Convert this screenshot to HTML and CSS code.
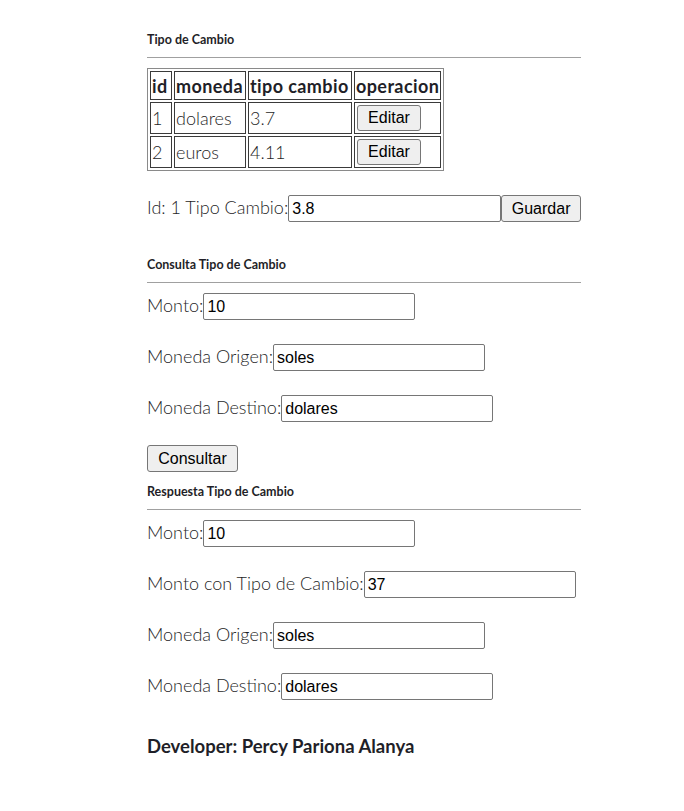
FILE: index.html
```html
<!DOCTYPE html>
<html lang="es">
<head>
<meta charset="utf-8">
<title>Tipo de Cambio</title>
<link rel="stylesheet" href="styles.css">
</head>
<body>
<div class="container">
  <h5 class="section-title first">Tipo de Cambio</h5>
  <hr class="rule">
  <table class="rates">
    <thead>
      <tr><th class="c-id">id</th><th class="c-mon">moneda</th><th class="c-tc">tipo cambio</th><th class="c-op">operacion</th></tr>
    </thead>
    <tbody>
      <tr><td>1</td><td>dolares</td><td>3.7</td><td><button class="btn btn-edit">Editar</button></td></tr>
      <tr><td>2</td><td>euros</td><td>4.11</td><td><button class="btn btn-edit">Editar</button></td></tr>
    </tbody>
  </table>
  <div class="row edit-row">
    <span class="label">Id: 1 Tipo Cambio:</span><input class="field field-wide" value="3.8"><button class="btn btn-save">Guardar</button>
  </div>

  <h5 class="section-title second">Consulta Tipo de Cambio</h5>
  <hr class="rule">
  <div class="row"><span class="label">Monto:</span><input class="field" value="10"></div>
  <div class="row"><span class="label">Moneda Origen:</span><input class="field" value="soles"></div>
  <div class="row"><span class="label">Moneda Destino:</span><input class="field" value="dolares"></div>
  <div class="row btn-row"><button class="btn btn-query">Consultar</button></div>

  <h5 class="section-title third">Respuesta Tipo de Cambio</h5>
  <hr class="rule">
  <div class="row"><span class="label">Monto:</span><input class="field" value="10"></div>
  <div class="row"><span class="label">Monto con Tipo de Cambio:</span><input class="field" value="37"></div>
  <div class="row"><span class="label">Moneda Origen:</span><input class="field" value="soles"></div>
  <div class="row"><span class="label">Moneda Destino:</span><input class="field" value="dolares"></div>

  <p class="developer">Developer: Percy Pariona Alanya</p>
</div>
</body>
</html>
```
FILE: styles.css
```css
html, body {
  margin: 0;
  padding: 0;
  background: #ffffff;
}
body {
  font-family: "Lato", "Open Sans", sans-serif;
  color: #1f1f28;
}
.container {
  width: 434px;
  margin-left: 147px;
  padding-top: 33px;
}
.section-title {
  margin: 0;
  font-size: 12.5px;
  line-height: 14px;
  font-weight: 700;
  color: #1f1f28;
}
.section-title.second { margin-top: 36px; }
.section-title.third { margin-top: 13px; }
.rule {
  margin: 10px 0 10px 0;
  border: 0;
  border-top: 1px solid #a0a0a0;
  height: 0;
}
.rates {
  border: 1px solid #8a8a8a;
  border-spacing: 2px;
  font-size: 18px;
  font-weight: 300;
}
.rates th, .rates td {
  box-sizing: border-box;
  border: 1px solid #3a3a3a;
  padding: 1px 1px;
  text-align: left;
}
.rates th {
  font-weight: 700;
  height: 29px;
  letter-spacing: 0.4px;
}
.rates td {
  height: 32px;
}
.c-id { width: 22px; }
.c-mon { width: 72px; }
.c-tc { width: 104px; }
.c-op { width: 87px; }
.row {
  display: flex;
  align-items: center;
  height: 27px;
  margin-bottom: 24px;
  font-size: 18px;
  font-weight: 300;
}
.edit-row { margin-top: 24px; margin-bottom: 0; }
.btn-row { margin-bottom: 0; margin-top: -1px; }
.label {
  white-space: nowrap;
  padding-bottom: 3px;
}
.field {
  box-sizing: border-box;
  width: 212px;
  height: 27px;
  border: 1px solid #767676;
  border-radius: 2px;
  padding: 1px 3px;
  font-family: "Liberation Sans", Arial, sans-serif;
  font-size: 16px;
  color: #000;
  background: #fff;
}
.field-wide { width: 213px; }
.btn {
  box-sizing: border-box;
  height: 27px;
  border: 1px solid #767676;
  border-radius: 3px;
  background: #efefef;
  font-family: "Liberation Sans", Arial, sans-serif;
  font-size: 16px;
  color: #000;
  padding: 1px 9px;
}
.btn-save { width: 81px; }
.btn-edit { width: 64px; height: 26px; padding: 1px 6px; margin-left: 1px; }
.btn-query { width: 91px; }
.developer {
  margin: 36px 0 0 0;
  font-size: 18.5px;
  line-height: 20px;
  font-weight: 700;
}
```
